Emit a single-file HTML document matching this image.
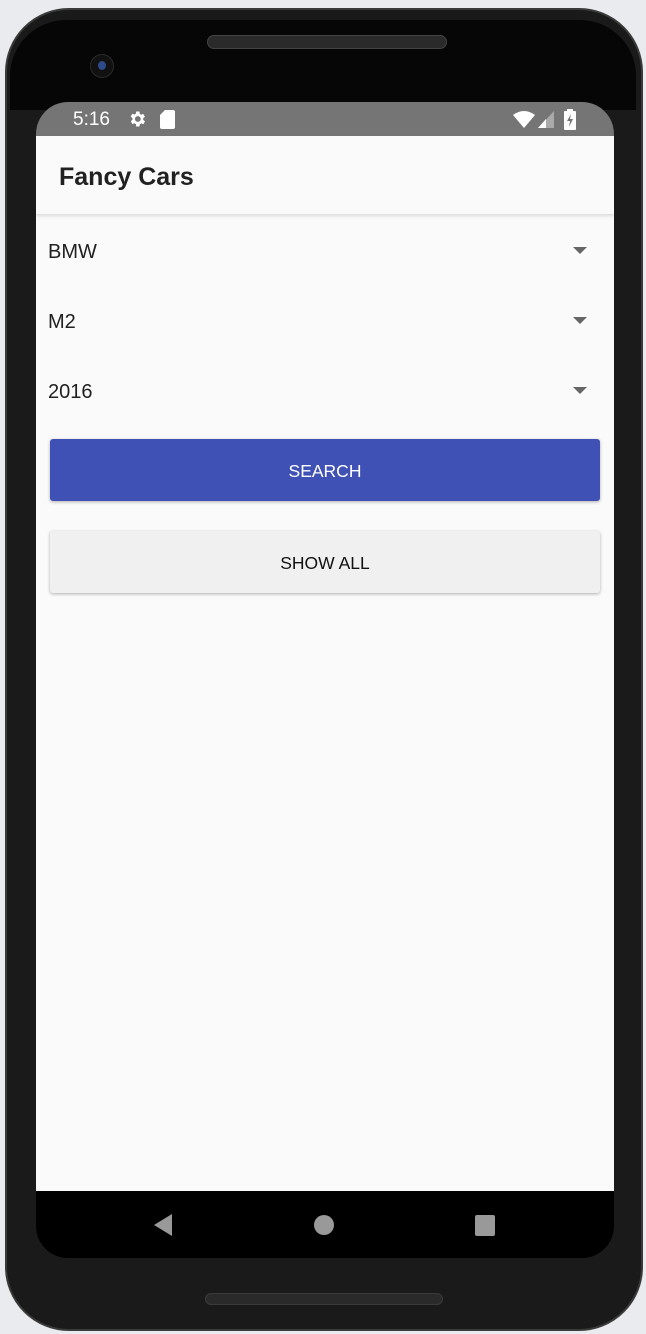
<!DOCTYPE html>
<html><head><meta charset="utf-8"><style>
body{margin:0;width:646px;height:1334px;background:#e9ebee;position:relative;overflow:hidden;font-family:"Liberation Sans",Roboto,sans-serif}
.phone{position:absolute;left:5px;top:8px;width:638px;height:1323px;background:#1a1a1a;border-radius:64px;border:2px solid #3a3a3a;box-sizing:border-box}
.top{position:absolute;left:10px;top:20px;width:626px;height:90px;background:#060606;border-radius:56px 56px 0 0}
.spk{position:absolute;left:207px;top:35px;width:240px;height:14px;background:#2a2a2a;border:1px solid #444;border-radius:8px;box-sizing:border-box}
.spk2{position:absolute;left:205px;top:1293px;width:238px;height:12px;background:#2a2a2a;border:1px solid #3a3a3a;border-radius:7px;box-sizing:border-box}
.cam{position:absolute;left:90px;top:54px;width:22px;height:22px;border-radius:50%;background:#111;border:1px solid #2a2a2a}
.cam:after{content:"";position:absolute;left:7px;top:6px;width:8px;height:9px;border-radius:50%;background:#2f4a8a}
.screen{position:absolute;left:36px;top:102px;width:578px;height:1156px;background:#000;border-radius:32px;overflow:hidden}
.status{position:absolute;left:0;top:0;width:578px;height:34px;background:#757575;color:#fff;font-size:19px}
.app{position:absolute;left:0;top:34px;width:578px;height:1055px;background:#fafafa}
.bar{position:absolute;left:0;top:0;width:578px;height:78px;background:#fafafa;box-shadow:0 2px 3px rgba(0,0,0,.12)}
.bar span{position:absolute;left:23px;top:27px;font-size:25px;font-weight:bold;color:#212121}
.sp{position:absolute;left:12px;font-size:20px;color:#212121}
.arr{position:absolute;left:537px;width:0;height:0;border-left:7px solid transparent;border-right:7px solid transparent;border-top:7px solid #666}
.btn{position:absolute;left:14px;width:550px;height:62px;border-radius:3px;text-align:center;line-height:64px;font-size:17.5px}
</style></head><body>
<div class="phone"></div>
<div class="top"></div>
<div class="spk"></div>
<div class="cam"></div>
<div class="spk2"></div>
<div class="screen">
 <div class="status">
  <span style="position:absolute;left:37px;top:7px">5:16</span>
  <svg style="position:absolute;left:91px;top:7px" width="20" height="20" viewBox="0 0 24 24"><path fill="#fff" d="M19.4 13a7.5 7.5 0 000-2l2.1-1.6-2-3.5-2.5 1a7 7 0 00-1.7-1L15 3h-4l-.4 2.7a7 7 0 00-1.7 1l-2.5-1-2 3.5L6.6 11a7.5 7.5 0 000 2l-2.1 1.6 2 3.5 2.5-1a7 7 0 001.7 1L11 21h4l.4-2.7a7 7 0 001.7-1l2.5 1 2-3.5zM13 15.5a3.5 3.5 0 110-7 3.5 3.5 0 010 7z"/></svg>
  <svg style="position:absolute;left:124px;top:8px" width="15" height="19" viewBox="0 0 15 19"><path fill="#fff" d="M5 0h8a2 2 0 012 2v15a2 2 0 01-2 2H2a2 2 0 01-2-2V5z"/></svg>
  <svg style="position:absolute;left:477px;top:9px" width="22" height="17" viewBox="0 0 22 17"><path fill="#fff" d="M0 4Q11-4 22 4L11 17z"/></svg>
  <svg style="position:absolute;left:502px;top:9px" width="16" height="17" viewBox="0 0 16 17"><path fill="#aaa" d="M16 0V17H0z"/><path fill="#fff" d="M8 8V17H0z"/></svg>
  <svg style="position:absolute;left:528px;top:7px" width="12" height="21" viewBox="0 0 12 21"><rect x="0" y="2" width="12" height="19" rx="1" fill="#fff"/><rect x="3" y="0" width="6" height="3" fill="#fff"/><path fill="#757575" d="M7 5L3 12h3l-1 6 4-8H6z"/></svg>
 </div>
 <div class="app">
  <div class="sp" style="top:105px">BMW</div><div class="arr" style="top:111px"></div>
  <div class="sp" style="top:175px">M2</div><div class="arr" style="top:181px"></div>
  <div class="sp" style="top:245px">2016</div><div class="arr" style="top:251px"></div>
  <div class="btn" style="top:303px;background:#3f51b5;color:#fff;box-shadow:0 1px 3px rgba(0,0,0,.3)">SEARCH</div>
  <div class="btn" style="top:395px;background:#f0f0f0;color:#111;box-shadow:0 1px 3px rgba(0,0,0,.3)">SHOW ALL</div>
  <div class="bar"><span>Fancy Cars</span></div>
 </div>
 <svg style="position:absolute;left:118px;top:1112px" width="18" height="22" viewBox="0 0 18 22"><path fill="#999" d="M18 0V22L0 11z"/></svg>
 <div style="position:absolute;left:278px;top:1113px;width:20px;height:20px;border-radius:50%;background:#999"></div>
 <div style="position:absolute;left:439px;top:1113px;width:20px;height:21px;border-radius:2px;background:#999"></div>
</div>
</body></html>
